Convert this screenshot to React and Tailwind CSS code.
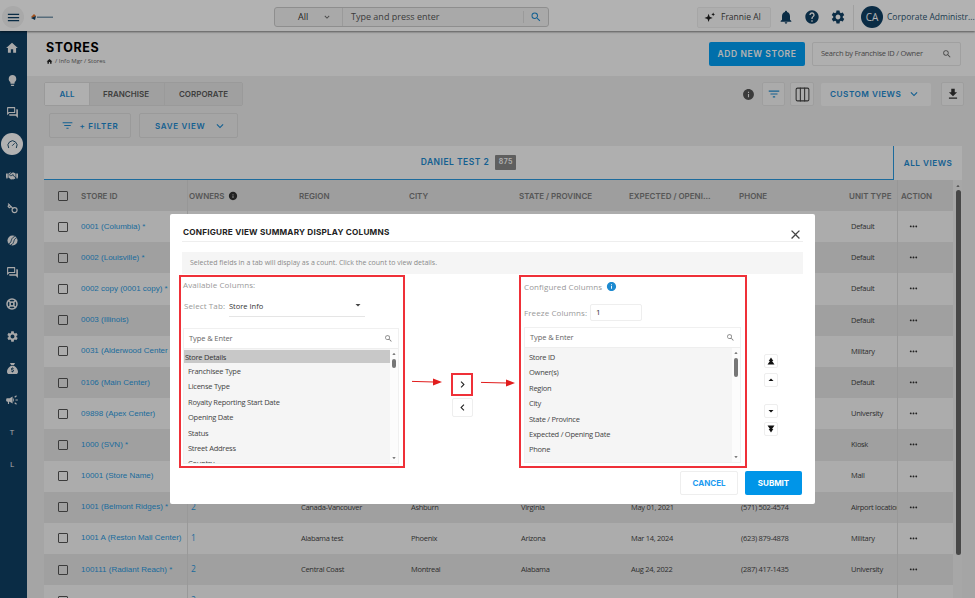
import React from "react";
import {
  MdMenu, MdHome, MdLightbulb, MdSettings, MdNotifications, MdHelp, MdInfo, MdFileDownload,
  MdSearch, MdFilterList, MdKeyboardArrowDown, MdKeyboardArrowRight, MdKeyboardArrowLeft,
  MdArrowDropDown, MdArrowDropUp, MdClose, MdMoreHoriz, MdOutlineForum, MdCampaign,
} from "react-icons/md";
import { FaHandshake, FaSackDollar } from "react-icons/fa6";
import { LuGauge, LuLifeBuoy, LuColumns3, LuKey } from "react-icons/lu";

const headFont = "font-['Inter',sans-serif]";
const bodyFont = "font-['Open_Sans',sans-serif]";

const rows = [
  { id: "0001 (Columbia) *", unit: "Default" },
  { id: "0002 (Louisville) *", unit: "Default" },
  { id: "0002 copy (0001 copy) *", unit: "Default" },
  { id: "0003 (Illinois)", unit: "Default" },
  { id: "0031 (Alderwood Center Mall)", unit: "Military" },
  { id: "0106 (Main Center)", unit: "Default" },
  { id: "09898 (Apex Center)", unit: "University" },
  { id: "1000 (SVN) *", unit: "Kiosk" },
  { id: "10001 (Store Name)", unit: "Mall" },
  { id: "1001 (Belmont Ridges) *", owners: "2", region: "Canada-Vancouver", city: "Ashburn", state: "Virginia", date: "May 01, 2021", phone: "(571) 502-4574", unit: "Airport location" },
  { id: "1001 A (Reston Mall Center)", owners: "1", region: "Alabama test", city: "Phoenix", state: "Arizona", date: "Mar 14, 2024", phone: "(623) 879-4878", unit: "Military" },
  { id: "100111 (Radiant Reach) *", owners: "2", region: "Central Coast", city: "Montreal", state: "Alabama", date: "Aug 24, 2022", phone: "(287) 417-1435", unit: "University" },
  { id: "10011 (Roseville West)", owners: "2", region: "British Columbia", city: "Roseville", state: "Las Vegas", date: "Apr 17, 2021", phone: "(312) 122-3748", unit: "Retail" },
];

const columns = ["REGION", "CITY", "STATE / PROVINCE", "EXPECTED / OPENI...", "PHONE", "UNIT TYPE"];

const available = ["Franchisee Type", "License Type", "Royalty Reporting Start Date", "Opening Date", "Status", "Street Address", "Country"];
const configured = ["Store ID", "Owner(s)", "Region", "City", "State / Province", "Expected / Opening Date", "Phone"];

const Checkbox = () => <span className="block w-[10px] h-[10px] border-[1.5px] border-[#555] rounded-[1px]" />;

// ball with an S shaped cut, no package has this one
const BallIcon = () => (
  <svg width="11" height="11" viewBox="0 0 12 12" fill="currentColor">
    <circle cx="6" cy="6" r="5.5" />
    <path d="M2 9.5 C6 8 3 4 8.5 1.5 M4 11 C9 9 6 5 10.5 3" fill="none" stroke="#0f3f63" strokeWidth="1" />
  </svg>
);

const sideIcons = [
  <MdHome size={14} />,
  <MdLightbulb size={13} />,
  <MdOutlineForum size={13} />,
  null,
  <FaHandshake size={12} />,
  <LuKey size={11} strokeWidth={2.5} className="-scale-x-100" />,
  <BallIcon />,
  <MdOutlineForum size={13} />,
  <LuLifeBuoy size={12} strokeWidth={3} />,
  <MdSettings size={13} />,
  <FaSackDollar size={11} />,
  <MdCampaign size={14} />,
];

const Sidebar = () => (
  <aside className="w-[27px] shrink-0 bg-[#0f3f63] flex flex-col items-center pt-[1px] pr-[3px] text-[#f2f2f2]">
    {sideIcons.map((icon, i) =>
      icon ? (
        <div key={i} className="h-[32px] w-full flex items-center justify-center">{icon}</div>
      ) : (
        <div key={i} className="h-[32px] w-full flex items-center justify-center">
          <span className="w-[22px] h-[22px] rounded-full bg-white text-[#0f3f63] flex items-center justify-center shrink-0">
            <LuGauge size={11} />
          </span>
        </div>
      )
    )}
    {["T", "L"].map((l) => (
      <div key={l} className={`h-[32px] flex items-center justify-center text-[8px] ${bodyFont}`}>{l}</div>
    ))}
  </aside>
);

const Topbar = () => (
  <header className="h-[31px] shrink-0 bg-white flex items-center pt-[3px] shadow-[0_1px_2px_rgba(0,0,0,0.5)] relative z-10">
    <span className="ml-[2px] w-[22px] h-[22px] rounded-full bg-[#f2f2f2] flex items-center justify-center text-[#0f3f63]">
      <MdMenu size={15} />
    </span>
    <svg className="ml-[6px]" width="24" height="8" viewBox="0 0 24 8">
      <path d="M1 4 L4 1 L6 3 L3 5Z" fill="#e8742a" />
      <path d="M1 5 L6 3 L5 7Z" fill="#0f3f63" />
      <rect x="7" y="3.5" width="16" height="1.5" fill="#7d9bb0" />
    </svg>
    <div className="ml-[220px] w-[275px] h-[20px] flex border border-[#ccc] rounded-[3px] bg-[#f3f3f3]">
      <div className={`w-[68px] border-r border-[#ddd] flex items-center pl-[23px] text-[9px] text-[#333] ${bodyFont}`}>
        All
        <MdKeyboardArrowDown size={10} className="ml-[14px] text-[#666]" />
      </div>
      <div className={`flex-1 pl-[8px] flex items-center text-[9px] text-[#555] ${bodyFont}`}>Type and press enter</div>
      <div className="w-[25px] border-l border-[#ddd] my-[3px] flex items-center justify-center text-[#1d8ad0]">
        <MdSearch size={12} />
      </div>
    </div>
    <div className={`ml-[148px] w-[74px] h-[21px] border border-[#eee] rounded-[2px] bg-[#fafafa] flex items-center pl-[6px] gap-[6px] text-[8.5px] text-[#444] ${bodyFont}`}>
      <svg width="11" height="11" viewBox="0 0 12 12" fill="#222">
        <path d="M5 2 L6.2 5.3 L9.5 6.5 L6.2 7.7 L5 11 L3.8 7.7 L0.5 6.5 L3.8 5.3Z" />
        <path d="M10 0.5 L10.6 2 L12 2.6 L10.6 3.2 L10 4.7 L9.4 3.2 L8 2.6 L9.4 2Z" />
      </svg>
      Frannie AI
    </div>
    <div className="ml-[7px] flex items-center gap-[10px] text-[#0f3f63]">
      <MdNotifications size={16} />
      <MdHelp size={16} />
      <MdSettings size={16} />
    </div>
    <span className="ml-[7px] w-px h-[25px] bg-[#e5e5e5]" />
    <span className={`ml-[7px] w-[22px] h-[22px] rounded-full bg-[#0f3f63] flex items-center justify-center text-white text-[10px] ${bodyFont}`}>CA</span>
    <span className={`ml-[4px] text-[8.5px] text-[#2d5672] whitespace-nowrap ${bodyFont}`}>Corporate Administr...</span>
  </header>
);

const TitleBand = () => (
  <div className="h-[45px] shrink-0 bg-[#fbfbfb] flex pl-[19px] pr-[14px]">
    <div className="pt-[10px]">
      <h1 className={`text-[12.5px] leading-[13px] font-bold tracking-[0.6px] text-black ${headFont}`}>STORES</h1>
      <div className={`mt-[3px] flex items-center gap-[2px] text-[6px] text-[#666] ${bodyFont}`}>
        <MdHome size={7} className="text-[#222]" /> / Info Mgr / Stores
      </div>
    </div>
    <div className="ml-auto pt-[11px] flex gap-[7px]">
      <button className={`w-[96px] h-[24px] rounded-[2px] bg-[#00a0f5] text-white text-[8.5px] font-semibold tracking-[0.6px] ${headFont}`}>ADD NEW STORE</button>
      <div className={`w-[149px] h-[24px] border border-[#e5e5e5] rounded-[2px] flex items-center pl-[8px] pr-[8px] justify-between text-[7.5px] tracking-[-0.25px] text-[#666] ${bodyFont}`}>
        Search by Franchise ID / Owner
        <MdSearch size={10} />
      </div>
    </div>
  </div>
);

const Toolbar = () => (
  <>
    <div className="flex items-center">
      <div className={`flex h-[24px] border border-[#ddd] rounded-[2px] text-[8px] font-semibold ${headFont}`}>
        <span className="w-[44px] bg-[#fbfbfb] text-[#1d8ad0] flex items-center justify-center">ALL</span>
        <span className="w-[75px] bg-[#e6e6e6] text-[#5a5a5a] border-l border-[#ddd] flex items-center justify-center pr-[2px]">FRANCHISE</span>
        <span className="w-[78px] bg-[#e6e6e6] text-[#5a5a5a] border-l border-[#ddd] flex items-center justify-center">CORPORATE</span>
      </div>
      <MdInfo size={13} className="ml-[499px] text-[#555]" />
      <span className="ml-[7px] w-[23px] h-[24px] border border-[#e3e3e3] rounded-[2px] bg-[#f5f5f5] flex items-center justify-center text-[#1d8ad0]">
        <MdFilterList size={14} />
      </span>
      <span className="ml-[5px] w-[24px] h-[24px] border border-[#e3e3e3] rounded-[2px] bg-[#f5f5f5] flex items-center justify-center text-[#444]">
        <LuColumns3 size={17} strokeWidth={1.5} />
      </span>
      <span className={`ml-[7px] w-[110px] h-[23px] bg-[#f8f8f8] rounded-[2px] flex items-center pl-[9px] gap-[6px] text-[8.2px] font-semibold tracking-[0.5px] text-[#1d8ad0] ${headFont}`}>
        CUSTOM VIEWS <MdKeyboardArrowDown size={14} />
      </span>
      <span className="ml-[10px] w-[23px] h-[24px] border border-[#e3e3e3] rounded-[2px] bg-[#f5f5f5] flex items-center justify-center text-[#333]">
        <MdFileDownload size={14} />
      </span>
    </div>
    <div className={`mt-[7px] ml-[5px] flex gap-[8px] text-[8px] font-semibold tracking-[0.7px] text-[#1d8ad0] ${headFont}`}>
      <span className="w-[82px] h-[25px] border border-[#ddd] rounded-[2px] flex items-center justify-center gap-[5px]">
        <MdFilterList size={13} /> + FILTER
      </span>
      <span className="w-[99px] h-[25px] border border-[#ddd] rounded-[2px] flex items-center pl-[15px] gap-[8px]">
        SAVE VIEW <MdKeyboardArrowDown size={14} />
      </span>
    </div>
  </>
);

const gridCols = "grid grid-cols-[37px_106px_112px_110px_110px_110px_110px_110px_48px_56px] w-[909px]";

const StoreTable = () => (
  <div className="mt-[8px] w-[918px]">
    <div className="flex h-[34px]">
      <div className={`flex-1 bg-[#fbfbfb] border-b-[1.5px] border-[#2a9ae0] flex items-center justify-center gap-[6px] text-[8.5px] font-semibold tracking-[0.5px] text-[#1d8ad0] ${headFont}`}>
        DANIEL TEST 2
        <span className="w-[21px] h-[15px] rounded-[1px] bg-[#888] text-white text-[7px] flex items-center justify-center">875</span>
      </div>
      <div className={`w-[69px] bg-[#fbfbfb] border-l-[1.5px] border-[#2a9ae0] flex items-center justify-center text-[8.2px] font-semibold tracking-[0.5px] text-[#1d8ad0] ${headFont}`}>
        ALL VIEWS
      </div>
    </div>
    <div className="flex">
      <div className="w-[909px]">
        <div className={`${gridCols} h-[31px] items-center bg-[#e3e3e3] text-[8px] font-semibold text-[#7c7c7c] ${headFont}`}>
          <span className="flex justify-center"><Checkbox /></span>
          <span>STORE ID</span>
          <span className="h-full border-l border-[#d8d8d8] pl-[1px] flex items-center gap-[3px]">
            OWNERS <MdInfo size={10} className="text-[#333]" />
          </span>
          {columns.map((c) => (
            <span key={c} className="whitespace-nowrap">{c}</span>
          ))}
          <span className="h-full border-l border-[#d8d8d8] pl-[3px] flex items-center">ACTION</span>
        </div>
        {rows.map((r, i) => (
          <div key={r.id} className={`${gridCols} h-[31.2px] items-center text-[7.5px] tracking-[-0.3px] text-[#444] ${bodyFont} ${i % 2 === 0 ? "bg-[#f7f7f7]" : "bg-[#e6e6e6]"}`}>
            <span className="flex justify-center"><Checkbox /></span>
            <span className="text-[8px] tracking-normal text-[#2a9ae0] font-['Liberation_Sans',sans-serif] whitespace-nowrap overflow-hidden">{r.id}</span>
            <span className="h-full border-l border-[#dcdcdc] pl-[3px] flex items-center text-[8.5px] text-[#2a9ae0]">{r.owners}</span>
            <span className="pl-[2px]">{r.region}</span>
            <span className="pl-[2px]">{r.city}</span>
            <span className="pl-[2px]">{r.state}</span>
            <span className="pl-[2px]">{r.date}</span>
            <span className="pl-[2px]">{r.phone}</span>
            <span className="pl-[2px] whitespace-nowrap overflow-hidden">{r.unit}</span>
            <span className="h-full border-l border-[#dcdcdc] flex items-center pl-[10px] text-[#333]"><MdMoreHoriz size={11} /></span>
          </div>
        ))}
      </div>
      <div className="w-[9px] flex flex-col items-center pl-[1px] pt-[2px] bg-[#efefef] h-[420px]">
        <MdArrowDropUp size={8} className="text-[#555]" />
        <span className="w-[5px] h-[365px] rounded-full bg-[#666]" />
      </div>
    </div>
  </div>
);

const RedArrow = ({ width, className = "" }) => (
  <svg width={width} height="8" viewBox={`0 0 ${width} 8`} className={`shrink-0 ${className}`}>
    <line x1="0" y1="3.4" x2={width - 8} y2="4" stroke="#e11d1d" strokeWidth="1" />
    <path d={`M${width - 9} 0.5 L${width} 4 L${width - 9} 7.5Z`} fill="#e11d1d" />
  </svg>
);

const ListSearch = () => (
  <div className={`h-[20px] bg-white border-b border-[#eee] flex items-center justify-between pl-[5px] pr-[5px] text-[7.5px] tracking-[-0.1px] text-[#666] ${bodyFont}`}>
    Type &amp; Enter
    <MdSearch size={9} className="text-[#777]" />
  </div>
);

const ListScroll = ({ thumbH }) => (
  <div className="w-[8px] bg-[#fcfcfc] flex flex-col items-center">
    <MdArrowDropUp size={8} className="text-[#555] mt-[1px]" />
    <span className={`w-[4px] rounded-full bg-[#777] mt-[1px] ${thumbH}`} />
    <MdArrowDropDown size={8} className="text-[#555] mt-auto mb-[1px]" />
  </div>
);

const OrderButton = ({ children, className = "" }) => (
  <span className={`w-[14px] h-[14px] bg-white border border-[#eee] rounded-[2px] flex items-center justify-center text-[#111] ${className}`}>{children}</span>
);

// two carets run together, as in the move to top / bottom buttons
const DoubleCaret = ({ down }) => (
  <svg width="8" height="8" viewBox="0 0 8 8" fill="currentColor" className={down ? "rotate-180" : ""}>
    <path d="M4 0.5 L6.3 4 H1.7Z" />
    <path d="M4 2.5 L7.5 7.5 H0.5Z" />
  </svg>
);

const ConfigureModal = () => (
  <div className="absolute inset-0 z-20 bg-black/30 pt-[214px] pl-[170px]">
    <div className={`w-[645px] h-[290px] bg-white rounded-[2px] relative pt-[12px] px-[9px] ${bodyFont}`}>
      <div className="mx-[3px] h-[16px] border-b border-[#eee] pl-[1px]">
        <h2 className={`text-[8.2px] leading-[13px] font-bold tracking-[0.2px] text-[#222] ${headFont}`}>CONFIGURE VIEW SUMMARY DISPLAY COLUMNS</h2>
      </div>
      <MdClose size={15} className="absolute right-[12px] top-[13px] text-[#444]" />
      <div className="mt-[10px] mx-[3px] h-[22px] bg-[#f5f5f5] flex items-center pl-[8px] text-[7px] text-[#8a8a8a]">
        Selected fields in a tab will display as a count. Click the count to view details.
      </div>

      <div className="mt-[1px] flex">
        <section className="w-[226px] h-[193px] border-2 border-[#ef3038] pl-[2px] pr-[4px] pt-[2px]">
          <div className="text-[8px] leading-[12px] tracking-[0.1px] text-[#999]">Available Columns:</div>
          <div className="mt-[8px] h-[18px] flex">
            <span className="text-[8px] leading-[14px] tracking-[0.1px] text-[#999] w-[46px] pl-[1px] whitespace-nowrap">Select Tab:</span>
            <div className="w-[136px] h-[18px] border-b border-[#e5e5e5] flex justify-between pr-[1px] text-[7.5px] leading-[14px] text-[#333]">
              <span>Store Info</span>
              <MdArrowDropDown size={12} className="text-[#444]" />
            </div>
          </div>
          <div className="mt-[11px] border border-[#f0f0f0]">
            <ListSearch />
            <div className="h-[114px] flex bg-[#f5f5f5]">
              <div className="flex-1 overflow-hidden pt-[1px] text-[7.5px] tracking-[-0.25px] text-[#444]">
                <div className="h-[13px] bg-[#c8c8c8] pl-[1px] leading-[14px] text-[#333]">Store Details</div>
                {available.map((a) => (
                  <div key={a} className="h-[15.4px] leading-[16px] pl-[4px]">{a}</div>
                ))}
              </div>
              <ListScroll thumbH="h-[9px]" />
            </div>
          </div>
        </section>

        <div className="w-[114px] h-[193px] flex items-start pl-[7px]">
          <RedArrow width={30} className="mt-[103px]" />
          <div className="ml-[9px] mt-[98px] flex flex-col gap-[2px] items-center">
            <span className="w-[22px] h-[23px] border-2 border-[#ef3038] flex items-center justify-center text-[#222]"><MdKeyboardArrowRight size={13} /></span>
            <span className="w-[21px] h-[19px] border border-[#eee] rounded-[2px] flex items-center justify-center text-[#222]"><MdKeyboardArrowLeft size={13} /></span>
          </div>
          <RedArrow width={34} className="ml-[8px] mt-[104px]" />
        </div>

        <section className="w-[228px] h-[193px] border-2 border-[#ef3038] pl-[3px] pr-[4px] pt-[3px]">
          <div className="h-[13px] flex items-center gap-[4px] text-[8px] tracking-[0.1px] text-[#999]">
            Configured Columns
            <MdInfo size={11} className="text-[#1d8ad0]" />
          </div>
          <div className="mt-[11px] h-[17px] flex items-center text-[8px] tracking-[0.1px] text-[#999]">
            <span className="w-[66px] whitespace-nowrap">Freeze Columns:</span>
            <span className="w-[52px] h-[17px] border border-[#eee] rounded-[2px] pl-[5px] text-[8px] leading-[14px] text-[#333]">1</span>
          </div>
          <div className="mt-[6px] border border-[#f0f0f0]">
            <ListSearch />
            <div className="h-[114px] flex bg-[#f5f5f5]">
              <div className="flex-1 overflow-hidden pt-[1px] text-[7.5px] tracking-[-0.25px] text-[#444]">
                {configured.map((c) => (
                  <div key={c} className="h-[15.4px] leading-[16px] pl-[4px]">{c}</div>
                ))}
              </div>
              <ListScroll thumbH="h-[19px]" />
            </div>
          </div>
        </section>

        <div className="ml-[17px] flex flex-col items-center pt-[79px]">
          <OrderButton><DoubleCaret /></OrderButton>
          <OrderButton className="mt-[5px]"><MdArrowDropUp size={12} /></OrderButton>
          <OrderButton className="mt-[17px]"><MdArrowDropDown size={12} /></OrderButton>
          <OrderButton className="mt-[4px]"><DoubleCaret down /></OrderButton>
        </div>
      </div>

      <div className={`mt-[3px] mr-[4px] flex justify-end gap-[7px] text-[8px] font-bold ${headFont}`}>
        <button className="w-[58px] h-[24px] bg-white border border-[#eee] rounded-[2px] text-[#1d9bf0]">CANCEL</button>
        <button className="w-[57px] h-[24px] bg-[#0095e8] rounded-[2px] text-white">SUBMIT</button>
      </div>
    </div>
  </div>
);

const App = () => {
  return (
    <div className="relative h-screen w-full overflow-hidden bg-[#ededed] flex flex-col">
      <Topbar />
      <div className="flex flex-1 min-h-0">
        <Sidebar />
        <main className="flex-1 min-w-0 flex flex-col">
          <TitleBand />
          <div className="pl-[17px] pt-[6px]">
            <Toolbar />
            <StoreTable />
          </div>
        </main>
      </div>
      <ConfigureModal />
    </div>
  );
};

export default App;
